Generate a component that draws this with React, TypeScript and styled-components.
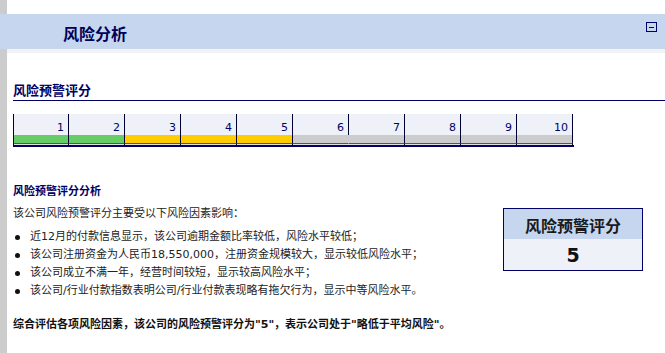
import React from 'react';
import styled, { createGlobalStyle } from 'styled-components';

const GlobalStyle = createGlobalStyle`
  html, body {
    margin: 0;
    padding: 0;
    background: #ffffff;
  }
  body {
    font-family: "DejaVu Sans", "Noto Sans CJK SC", sans-serif;
  }
`;

const NAVY = '#000066';

type Level = 'low' | 'mid' | 'none';

const scores: { value: number; level: Level; noDivider?: boolean }[] = [
  { value: 1, level: 'low' },
  { value: 2, level: 'low' },
  { value: 3, level: 'mid' },
  { value: 4, level: 'mid' },
  { value: 5, level: 'mid' },
  { value: 6, level: 'none', noDivider: true },
  { value: 7, level: 'none' },
  { value: 8, level: 'none' },
  { value: 9, level: 'none' },
  { value: 10, level: 'none' },
];

const factors = [
  '近12月的付款信息显示，该公司逾期金额比率较低，风险水平较低；',
  '该公司注册资金为人民币18,550,000，注册资金规模较大，显示较低风险水平；',
  '该公司成立不满一年，经营时间较短，显示较高风险水平；',
  '该公司/行业付款指数表明公司/行业付款表现略有拖欠行为，显示中等风险水平。',
];

const App: React.FC = () => {
  return (
    <>
      <GlobalStyle />
      <Page>
        <PanelHeader>
          <PanelTitle>风险分析</PanelTitle>
          <CollapseButton aria-label="collapse" />
        </PanelHeader>
        <HeaderShadow />
        <Content>
          <SectionTitle>风险预警评分</SectionTitle>
          <ScoreBar>
            {scores.map((s) => (
              <ScoreCell key={s.value}>
                <ScoreNumber>{s.value}</ScoreNumber>
                <ScoreBand $level={s.level} $noDivider={s.noDivider} />
                <BandGap $noDivider={s.noDivider} />
              </ScoreCell>
            ))}
          </ScoreBar>

          <SubTitle>风险预警评分分析</SubTitle>
          <AnalysisRow>
            <AnalysisText>
              <Paragraph>该公司风险预警评分主要受以下风险因素影响：</Paragraph>
              <FactorList>
                {factors.map((f) => (
                  <FactorItem key={f}>
                    <Dot />
                    <span>{f}</span>
                  </FactorItem>
                ))}
              </FactorList>
            </AnalysisText>
            <ScoreBox>
              <ScoreBoxHead>风险预警评分</ScoreBoxHead>
              <ScoreBoxValue>5</ScoreBoxValue>
            </ScoreBox>
          </AnalysisRow>
          <Conclusion>
            综合评估各项风险因素，该公司的风险预警评分为"5"，表示公司处于"略低于平均风险"。
          </Conclusion>
        </Content>
      </Page>
    </>
  );
};

const Page = styled.div`
  min-height: 353px;
  box-sizing: border-box;
  padding-top: 14px;
  border-left: 7px solid #cccccc;
`;

const PanelHeader = styled.div`
  display: flex;
  align-items: flex-start;
  justify-content: space-between;
  height: 35px;
  margin-left: -7px;
  background: #c6d6ef;
`;

const PanelTitle = styled.h2`
  margin: 0;
  padding-left: 63px;
  font-size: 16px;
  line-height: 38px;
  font-weight: bold;
  color: #00005a;
  font-family: "Noto Sans CJK SC", sans-serif;
`;

const CollapseButton = styled.span`
  position: relative;
  width: 9px;
  height: 8px;
  margin: 8px 8px 0 0;
  border: 1px solid ${NAVY};
  display: flex;
  align-items: center;
  justify-content: center;

  &::after {
    content: '';
    width: 5px;
    height: 1px;
    background: ${NAVY};
  }
`;

const HeaderShadow = styled.div`
  height: 4px;
  background: #f2f2f2;
`;

const Content = styled.div`
  padding-left: 6px;
`;

const SectionTitle = styled.h3`
  margin: 29px 0 0;
  padding-bottom: 2px;
  font-size: 13px;
  line-height: 16px;
  font-weight: bold;
  color: ${NAVY};
  border-bottom: 1px solid ${NAVY};
  font-family: "Noto Sans CJK SC", sans-serif;
`;

const ScoreBar = styled.div`
  display: flex;
  width: 560px;
  margin-top: 13px;
  border-left: 1px solid #000033;
  border-bottom: 2px solid ${NAVY};
  box-sizing: border-box;
  width: 561px;
`;

const ScoreCell = styled.div`
  display: flex;
  flex-direction: column;
  width: 56px;
  &:first-child {
    width: 55px;
  }
`;

const ScoreNumber = styled.div`
  height: 21px;
  padding: 0 4px 0 0;
  background: #eef1f7;
  border-right: 1px solid #000033;
  text-align: right;
  font-size: 11px;
  line-height: 28px;
  color: ${NAVY};
  font-family: "DejaVu Sans", sans-serif;
`;

const bandColors: Record<Level, string> = {
  low: '#66cc66',
  mid: '#ffcc00',
  none: '#cccccc',
};

const ScoreBand = styled.div<{ $level: Level; $noDivider?: boolean }>`
  height: 8px;
  background: ${(p) => bandColors[p.$level]};
  border-bottom: 1px solid #555555;
  border-right: 1px solid ${(p) => (p.$noDivider ? bandColors[p.$level] : '#000033')};
`;

const BandGap = styled.div<{ $noDivider?: boolean }>`
  height: 1px;
  background: #e2e2e2;
  border-right: 1px solid ${(p) => (p.$noDivider ? '#e2e2e2' : '#000033')};
`;

const SubTitle = styled.h4`
  margin: 34px 0 0;
  font-size: 11px;
  line-height: 18px;
  font-weight: bold;
  color: ${NAVY};
  font-family: "Noto Sans CJK SC", sans-serif;
`;

const AnalysisRow = styled.div`
  display: flex;
  align-items: flex-start;
  justify-content: space-between;
  margin-top: 6px;
  padding-right: 22px;
`;

const AnalysisText = styled.div`
  display: flex;
  flex-direction: column;
`;

const Paragraph = styled.p`
  margin: 0;
  font-size: 11px;
  line-height: 18px;
  color: #222222;
`;

const FactorList = styled.ul`
  list-style: none;
  margin: 5px 0 0;
  padding: 0;
`;

const FactorItem = styled.li`
  display: flex;
  align-items: center;
  gap: 10px;
  font-size: 11px;
  line-height: 18px;
  color: #222222;
`;

const Dot = styled.span`
  flex: none;
  width: 5px;
  height: 5px;
  margin-left: 2px;
  border-radius: 50%;
  background: #111111;
`;

const ScoreBox = styled.div`
  display: flex;
  flex-direction: column;
  width: 140px;
  margin-top: 3px;
  border: 1px solid ${NAVY};
  box-sizing: border-box;
`;

const ScoreBoxHead = styled.div`
  height: 30px;
  background: #c6d6ef;
  text-align: center;
  font-size: 16px;
  line-height: 32px;
  font-weight: bold;
  color: #1a1a1a;
  font-family: "Noto Sans CJK SC", sans-serif;
`;

const ScoreBoxValue = styled.div`
  height: 31px;
  background: #eef1f7;
  text-align: center;
  font-size: 19px;
  line-height: 33px;
  font-weight: bold;
  color: #111111;
  font-family: "DejaVu Sans", sans-serif;
`;

const Conclusion = styled.p`
  margin: 16px 0 0;
  font-size: 11px;
  line-height: 18px;
  font-weight: bold;
  color: #111111;
`;

export default App;
